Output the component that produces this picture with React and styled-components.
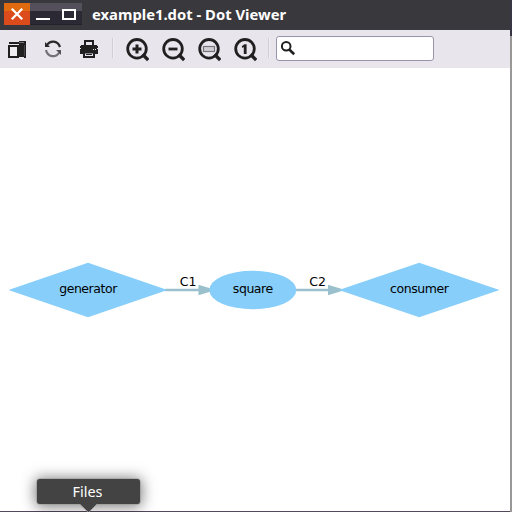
import React from "react";
import styled, { createGlobalStyle } from "styled-components";

const GlobalStyle = createGlobalStyle`
  * { box-sizing: border-box; }
  body { margin: 0; background: #999; overflow: hidden; }
`;

const Desktop = styled.div`
  position: relative;
  width: 512px;
  height: 512px;
  overflow: hidden;
  background: linear-gradient(#373543 36px, #999897 36px);
`;

const Window = styled.main`
  display: flex;
  flex-direction: column;
  width: 510px;
  height: 512px;
  background: #fff;
  border-bottom: 1px solid #51485b;
`;

const TitleBar = styled.header`
  display: flex;
  align-items: flex-start;
  gap: 10px;
  height: 30px;
  flex: none;
  padding: 3px 0 0 4px;
  background: #39383c;
`;

const WindowButtons = styled.div`
  display: flex;
  height: 22px;
`;

const WindowButton = styled.button`
  display: block;
  width: 26px;
  height: 22px;
  padding: 0;
  border: 0;
  background: ${(p) =>
    p.$close
      ? "linear-gradient(#df6a10 8px, #dc4b1c 8px)"
      : "linear-gradient(#53505b 8px, #2b2a34 8px 21px, #222129 21px)"};
`;

const Title = styled.h1`
  margin: 0;
  font: 700 14.8px/23px "Noto Sans", sans-serif;
  white-space: nowrap;
  color: #fff;
`;

const Toolbar = styled.nav`
  display: flex;
  align-items: flex-start;
  flex: none;
  height: 38px;
  padding: 6px 0 0 5px;
  background: #e8e5ec;
`;

const ToolGroup = styled.div`
  display: flex;
  gap: 12px;
`;

const ToolIcon = styled.svg`
  display: block;
  width: 24px;
  height: 26px;
`;

const Separator = styled.span`
  width: 2px;
  height: 20px;
  margin: 2px ${(p) => p.$after}px 0 11px;
  border-left: 1px solid #d0cdd4;
  border-right: 1px solid #f0eef3;
`;

const SearchField = styled.label`
  display: flex;
  width: 158px;
  height: 25px;
  padding: 4px 0 0 4px;
  border: 1px solid #9994aa;
  border-radius: 3px;
  background: #fff;
`;

const SearchIcon = styled.svg`
  flex: none;
  width: 15px;
  height: 15px;
`;

const SearchInput = styled.input`
  width: 130px;
  height: 16px;
  border: 0;
  outline: 0;
  background: transparent;
  font: 13px "Noto Sans", sans-serif;
`;

const Canvas = styled.section`
  flex: 1;
  min-height: 0;
`;

const Graph = styled.svg`
  display: block;
  width: 510px;
  height: 443px;
`;

const GraphText = styled.text`
  font: 12.5px "DejaVu Sans", sans-serif;
  letter-spacing: ${(p) => (p.$tight ? "-0.45px" : "0")};
  fill: #000;
  text-anchor: middle;
`;

const Tooltip = styled.div`
  position: absolute;
  left: 37px;
  top: 479px;
  width: 103px;
  height: 25px;
  border-radius: 3px;
  background: #434343;
  box-shadow: 0 0 0 0.6px #999, 0 1px 14px 2px rgba(0, 0, 0, 0.5);
  color: #fff;
  font: 14.4px/25px "Noto Sans", sans-serif;
  text-align: center;
  padding-right: 2px;
`;

const TooltipArrow = styled.svg`
  position: absolute;
  left: 41px;
  top: 25px;
  width: 20px;
  height: 8px;
`;

const INK = "#202020";

function ZoomIcon({ label, children }) {
  return (
    <ToolIcon viewBox="0 0 24 26" role="img" aria-label={label}>
      <circle cx="12" cy="12.8" r="9.3" fill="none" stroke={INK} strokeWidth="2.8" />
      <path d="M17.5 18.3 L23.2 24" stroke={INK} strokeWidth="3.4" />
      {children}
    </ToolIcon>
  );
}

function Node({ x, label, ellipse, halfWidth = 79.5 }) {
  return (
    <g>
      {ellipse ? (
        <ellipse cx={x} cy="222" rx="43.5" ry="19.3" fill="#87cefa" />
      ) : (
        <polygon
          points={`${x - halfWidth},222 ${x},194.8 ${x + halfWidth},222 ${x},249.3`}
          fill="#87cefa"
        />
      )}
      <GraphText $tight x={x} y="225">{label}</GraphText>
    </g>
  );
}

function Edge({ from, to, labelX, label }) {
  return (
    <g>
      <path d={`M${from} 222 H${to - 12}`} stroke="#9bc0cd" strokeWidth="2.5" />
      <polygon points={`${to - 14},216.7 ${to},221 ${to},223 ${to - 14},227.3`} fill="#9bc0cd" />
      <GraphText x={labelX} y="218">{label}</GraphText>
    </g>
  );
}

export default function App() {
  return (
    <Desktop>
      <GlobalStyle />
      <Window>
        <TitleBar>
          <WindowButtons>
            <WindowButton $close aria-label="Close">
              <svg width="26" height="22" display="block">
                <path d="M7.8 5.8 L18.2 16.2 M18.2 5.8 L7.8 16.2" stroke="#fff" strokeWidth="2.3" />
              </svg>
            </WindowButton>
            <WindowButton aria-label="Minimize">
              <svg width="26" height="22" display="block">
                <path d="M6 16 H20" stroke="#fff" strokeWidth="2" />
              </svg>
            </WindowButton>
            <WindowButton aria-label="Maximize">
              <svg width="26" height="22" display="block">
                <rect x="7" y="7" width="12" height="9" fill="none" stroke="#fff" strokeWidth="2" />
              </svg>
            </WindowButton>
          </WindowButtons>
          <Title>example1.dot - Dot Viewer</Title>
        </TitleBar>
        <Toolbar>
          <ToolGroup>
            <ToolIcon viewBox="0 0 24 26" role="img" aria-label="Open">
              <path d="M4 6 H14 V5 H21 V22 H19 V21 H14 V8 H4 Z" fill={INK} />
              <path d="M14 6.5 H19" stroke="#77757b" strokeWidth="1" />
              <path d="M19.5 9 V20" stroke="#454448" strokeWidth="1" />
              <rect x="4" y="10" width="9" height="11" fill="#efedf2" stroke={INK} strokeWidth="2" />
              <path d="M13 9 H14 V22 H12 V11" fill={INK} />
            </ToolIcon>
            <ToolIcon viewBox="0 0 24 26" role="img" aria-label="Reload">
              <path d="M6 9 C9 4.2 16.5 4.2 19 11" fill="none" stroke="#29292a" strokeWidth="2.2" />
              <path d="M4 6 V11 H9 Z" fill="#29292a" />
              <path d="M5 14 C6.5 21.3 15 22 18.3 16.5" fill="none" stroke="#747277" strokeWidth="2.2" />
              <path d="M20 19 V14 H15 Z" fill="#555358" />
            </ToolIcon>
            <ToolIcon viewBox="0 0 24 26" role="img" aria-label="Print">
              <path d="M8 9 V5 H16 V9" fill="none" stroke={INK} strokeWidth="2" />
              <path d="M4 9 H20 V10 H21 V12 H3 V10 H4 Z" fill={INK} />
              <path d="M4 12 H20 V13 H21 V18 H3 V13 H4 Z" fill={INK} />
              <path d="M16 13.5 H17 M18 13.5 H19" stroke="#e8e5ec" strokeWidth="1" />
              <path d="M7 16.5 V21 H17 V16.5 Z" fill="#e8e5ec" stroke={INK} strokeWidth="2" />
              <path d="M9 18.5 H15" stroke={INK} strokeWidth="1" />
            </ToolIcon>
          </ToolGroup>
          <Separator $after={11} />
          <ToolGroup>
            <ZoomIcon label="Zoom in">
              <path d="M7.5 13 H16.5 M12 8.5 V17.5" stroke={INK} strokeWidth="3" />
            </ZoomIcon>
            <ZoomIcon label="Zoom out">
              <path d="M7.5 13 H16.5" stroke={INK} strokeWidth="2.8" />
            </ZoomIcon>
            <ZoomIcon label="Fit">
              <rect x="6.5" y="10.5" width="11" height="5" fill="#d0cdd3" stroke="#777579" strokeWidth="1.2" />
            </ZoomIcon>
            <ZoomIcon label="Actual size">
              <path d="M8.8 10.2 L11.4 8.2 H13.6 V18 H10.8 V11 L9.4 12 Z" fill={INK} />
            </ZoomIcon>
          </ToolGroup>
          <Separator $after={6} />
          <SearchField>
            <SearchIcon viewBox="0 0 15 15">
              <circle cx="5.2" cy="5.3" r="4.3" fill="none" stroke={INK} strokeWidth="2" />
              <path d="M8 8.2 L13.2 13.3" stroke={INK} strokeWidth="2.6" />
            </SearchIcon>
            <SearchInput aria-label="Search" />
          </SearchField>
        </Toolbar>
        <Canvas>
          <Graph viewBox="0 0 510 443">
            <Edge from={165} to={212.5} labelX={188} label="C1" />
            <Edge from={295} to={342} labelX={317.5} label="C2" />
            <Node x={88} label="generator" />
            <Node x={252.8} label="square" ellipse />
            <Node x={419.2} label="consumer" halfWidth={80.3} />
          </Graph>
        </Canvas>
      </Window>
      <Tooltip>
        Files
        <TooltipArrow viewBox="0 0 20 8">
          <path d="M1 -1 L10.5 8.5 L20 -1 Z" fill="#434343" />
          <path d="M1.5 0 L10 8 M19 0 L11 8" stroke="#999" strokeWidth="0.8" />
        </TooltipArrow>
      </Tooltip>
    </Desktop>
  );
}
